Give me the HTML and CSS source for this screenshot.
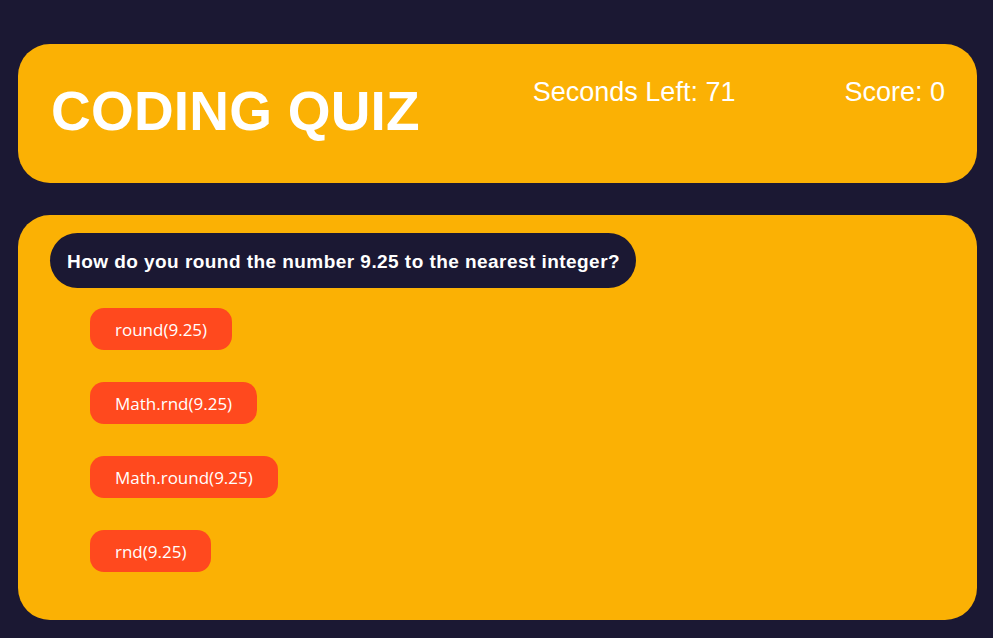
FILE: index.html
```html
<!DOCTYPE html>
<html lang="en">
<head>
<meta charset="utf-8">
<title>Coding Quiz</title>
<link rel="stylesheet" href="styles.css">
</head>
<body>
<header class="header card">
  <h1 class="title">CODING QUIZ</h1>
  <div class="stats">
    <span class="stat">Seconds Left: 71</span>
    <span class="stat">Score: 0</span>
  </div>
</header>
<main class="quiz card">
  <h2 class="question">How do you round the number 9.25 to the nearest integer?</h2>
  <ul class="answers">
    <li><button class="answer">round(9.25)</button></li>
    <li><button class="answer">Math.rnd(9.25)</button></li>
    <li><button class="answer">Math.round(9.25)</button></li>
    <li><button class="answer">rnd(9.25)</button></li>
  </ul>
</main>
</body>
</html>
```

FILE: styles.css
```css
html, body {
  margin: 0;
  padding: 0;
}
body {
  background: #1b1833;
  padding: 44px 16px 18px 18px;
  font-family: "Liberation Sans", Arial, sans-serif;
  color: #fff;
  display: flex;
  flex-direction: column;
  gap: 32px;
}
.card {
  background: #fbb104;
  border-radius: 32px;
}
.header {
  height: 139px;
  box-sizing: border-box;
  display: flex;
  justify-content: space-between;
  align-items: flex-start;
  padding: 0 32px 0 33px;
}
.title {
  margin: 35px 0 0 0;
  font-size: 55px;
  font-weight: 700;
  line-height: 64px;
  letter-spacing: 0.2px;
}
.stats {
  display: flex;
  gap: 109px;
  margin-top: 33px;
}
.stat {
  font-size: 27px;
  line-height: 30px;
}
.quiz {
  height: 405px;
  box-sizing: border-box;
  padding: 18px 32px 48px 32px;
  display: flex;
  flex-direction: column;
  align-items: flex-start;
}
.question {
  margin: 0;
  background: #1b1833;
  border-radius: 28px;
  height: 55px;
  box-sizing: border-box;
  padding: 2px 16px 0 17px;
  display: flex;
  align-items: center;
  font-size: 19px;
  font-weight: 700;
  letter-spacing: 0.45px;
}
.answers {
  list-style: none;
  margin: 20px 0 0 40px;
  padding: 0;
  display: flex;
  flex-direction: column;
  gap: 32px;
}
.answer {
  background: #ff491e;
  color: #fff;
  border: none;
  border-radius: 14px;
  height: 42px;
  padding: 0 25px;
  font-family: "Open Sans", sans-serif;
  font-size: 17px;
}
```
